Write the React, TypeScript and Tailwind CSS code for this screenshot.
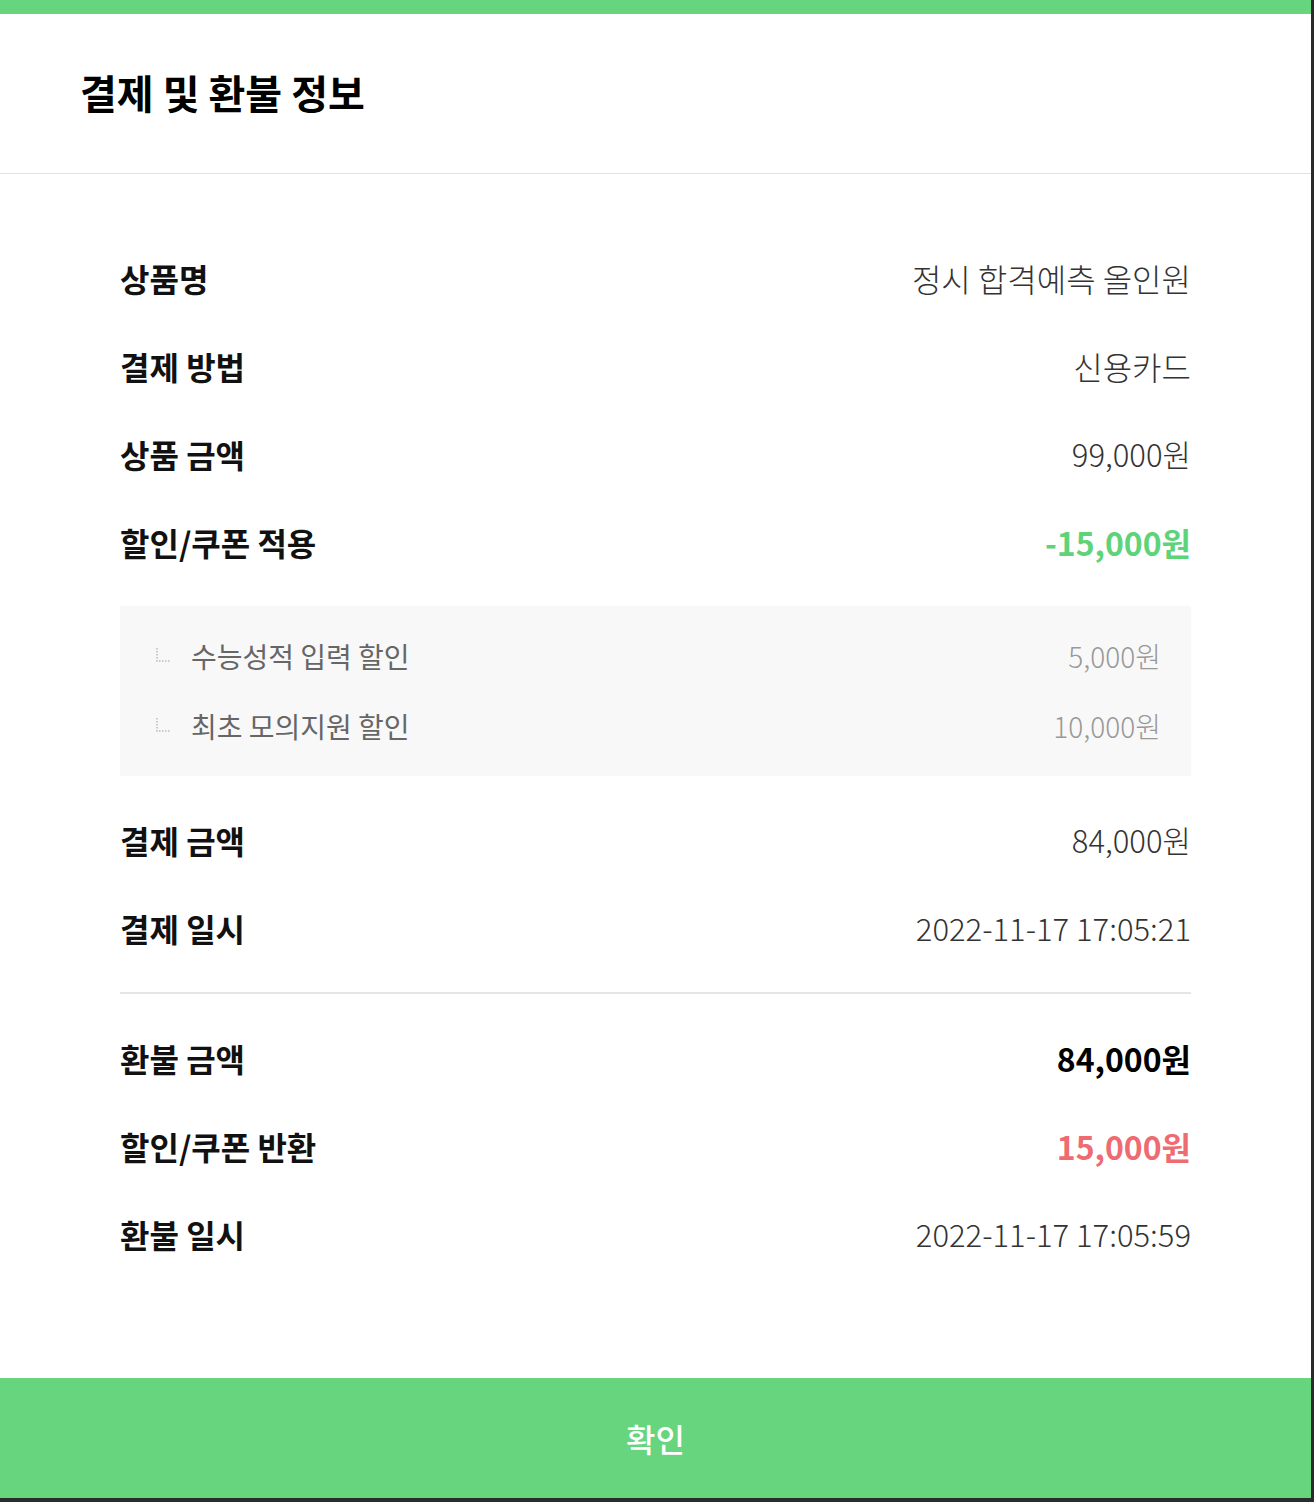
const rows = [
  { label: '상품명', value: '정시 합격예측 올인원', size: 'text-[32px]' },
  { label: '결제 방법', value: '신용카드', size: 'text-[32px]' },
  { label: '상품 금액', value: '99,000원', size: 'text-[31px]' },
]

const discounts = [
  { label: '수능성적 입력 할인', value: '5,000원' },
  { label: '최초 모의지원 할인', value: '10,000원' },
]

function Row({ label, children }: { label: string; children: React.ReactNode }) {
  return (
    <div className="flex h-[88px] items-center justify-between">
      <span className="text-[32px] font-bold text-[#111]">{label}</span>
      {children}
    </div>
  )
}

function Value({ children, size = 'text-[31px]' }: { children: React.ReactNode; size?: string }) {
  return <span className={`${size} font-light text-[#333]`}>{children}</span>
}

function TreeMark() {
  return (
    <svg width="18" height="18" viewBox="0 0 18 18" className="shrink-0">
      <path d="M2 1v13h14" fill="none" stroke="#bbb" strokeWidth="1.5" strokeDasharray="1.5 1.5" />
    </svg>
  )
}

export default function App() {
  return (
    <div className="min-h-[1502px] w-full bg-[#2b2b2b]" style={{ fontFamily: '"Noto Sans CJK KR", "Noto Sans", sans-serif' }}>
      <div className="flex h-[1498px] w-[1311px] flex-col bg-white">
        {/* Header */}
        <div className="h-[14px] bg-[#66d57d]" />
        <div className="flex h-[160px] items-center border-b border-[#e2e2e2] px-[80px] pb-[4px]">
          <h1 className="text-[40px] font-bold text-black">결제 및 환불 정보</h1>
        </div>

        {/* Body */}
        <div className="flex-1 px-[120px] pt-[60px]">
          {rows.map((r) => (
            <Row key={r.label} label={r.label}>
              <Value size={r.size}>{r.value}</Value>
            </Row>
          ))}
          <Row label="할인/쿠폰 적용">
            <span className="text-[32px] font-bold text-[#5fd37a]">-15,000원</span>
          </Row>

          <div className="mt-[20px] bg-[#f8f8f8] py-[15px] pl-[31px] pr-[30px]">
            {discounts.map((d) => (
              <div key={d.label} className="flex h-[70px] items-center justify-between">
                <div className="flex items-center gap-[18px] pl-[4px]">
                  <TreeMark />
                  <span className="text-[28px] text-[#666]">{d.label}</span>
                </div>
                <span className="text-[28px] font-light text-[#999]">{d.value}</span>
              </div>
            ))}
          </div>

          <div className="mt-[20px]">
            <Row label="결제 금액">
              <Value>84,000원</Value>
            </Row>
            <Row label="결제 일시">
              <Value>2022-11-17 17:05:21</Value>
            </Row>
          </div>

          <div className="my-[20px] h-[2px] bg-[#e5e5e5]" />

          <Row label="환불 금액">
            <span className="text-[32px] font-bold text-black">84,000원</span>
          </Row>
          <Row label="할인/쿠폰 반환">
            <span className="text-[32px] font-bold text-[#ef6b72]">15,000원</span>
          </Row>
          <Row label="환불 일시">
            <Value>2022-11-17 17:05:59</Value>
          </Row>
        </div>

        {/* Footer */}
        <button className="flex h-[120px] items-center justify-center bg-[#66d57d] text-[32px] font-medium text-white">
          확인
        </button>
      </div>
    </div>
  )
}
